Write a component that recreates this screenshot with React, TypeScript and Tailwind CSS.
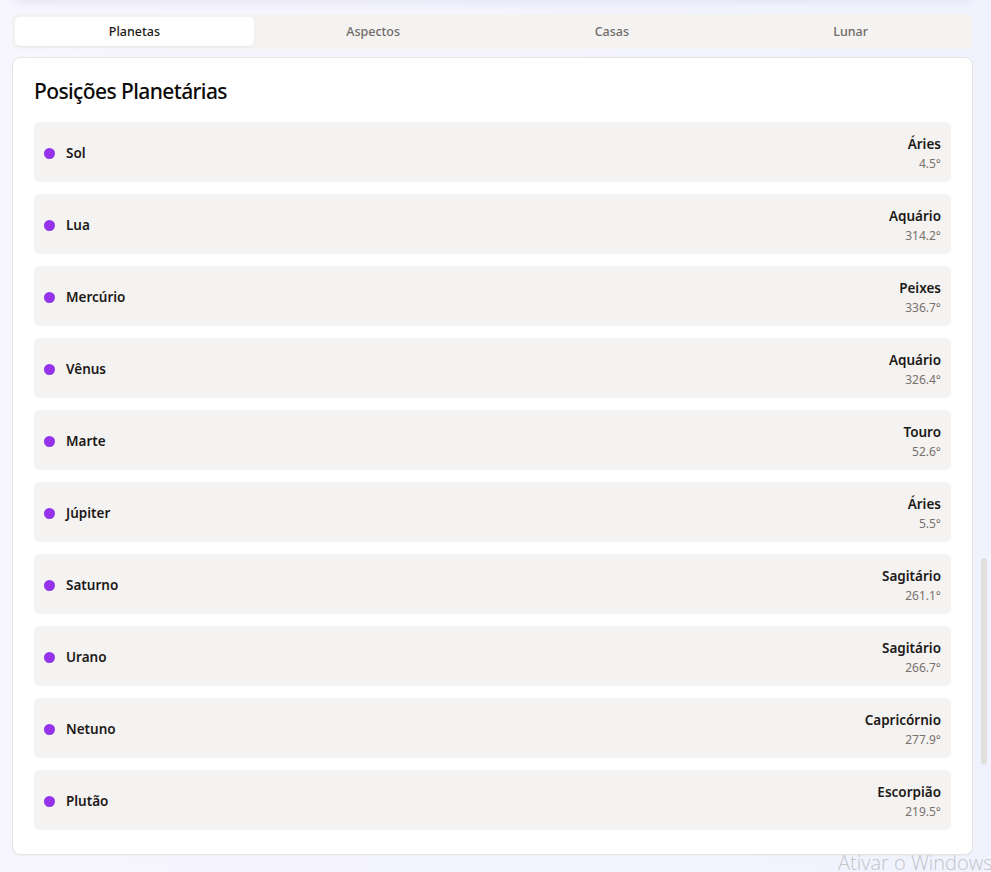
import React from 'react';

// Posições de cada planeta no mapa
const planets = [
  { name: 'Sol', sign: 'Áries', degree: '4.5°' },
  { name: 'Lua', sign: 'Aquário', degree: '314.2°' },
  { name: 'Mercúrio', sign: 'Peixes', degree: '336.7°' },
  { name: 'Vênus', sign: 'Aquário', degree: '326.4°' },
  { name: 'Marte', sign: 'Touro', degree: '52.6°' },
  { name: 'Júpiter', sign: 'Áries', degree: '5.5°' },
  { name: 'Saturno', sign: 'Sagitário', degree: '261.1°' },
  { name: 'Urano', sign: 'Sagitário', degree: '266.7°' },
  { name: 'Netuno', sign: 'Capricórnio', degree: '277.9°' },
  { name: 'Plutão', sign: 'Escorpião', degree: '219.5°' },
];

const tabs = ['Planetas', 'Aspectos', 'Casas', 'Lunar'];

export default function App() {
  return (
    <div
      className="relative h-[872px] overflow-hidden bg-gradient-to-r from-[#f7f5fe] to-[#f0f3fe] pl-3 pr-[18px]"
      style={{ fontFamily: '"Noto Sans", "Open Sans", sans-serif' }}
    >
      {/* card acima, fora da tela */}
      <div className="-mt-[30px] h-[30px] rounded-lg bg-white shadow-[0_2px_8px_rgba(90,80,160,0.10)]" />

      {/* Abas */}
      <div className="mt-[14px] grid grid-cols-4 rounded-md bg-[#f4f3f1] p-[3px]">
        {tabs.map((tab, i) => (
          <div
            key={tab}
            className={
              i === 0
                ? 'flex h-[29px] items-center justify-center rounded-[5px] bg-white pt-[2px] text-[12.5px] font-medium text-[#1c1917] shadow-[0_1px_2px_rgba(0,0,0,0.05)]'
                : 'flex h-[29px] items-center justify-center pt-[2px] text-[12.5px] font-medium text-[#6f6b68]'
            }
          >
            {tab}
          </div>
        ))}
      </div>

      {/* Posições */}
      <div className="mt-2 rounded-lg border border-[#e7e5e4] bg-white px-[21px] pb-[24px] pt-[19px] shadow-[0_1px_2px_rgba(0,0,0,0.04)]">
        <h2 className="mb-[17px] text-[21px] font-medium leading-[28px] tracking-[-0.6px] text-[#0c0a09]">
          Posições Planetárias
        </h2>
        <div className="flex flex-col gap-3">
          {planets.map((p) => (
            <div
              key={p.name}
              className="flex h-[60px] items-center justify-between rounded-md bg-[#f4f3f2] px-[10px]"
            >
              <div className="flex items-center gap-[11px] pt-[2px]">
                <span className="h-[11px] w-[11px] rounded-full bg-[#9333ea]" />
                <span className="text-[13.5px] font-semibold text-[#1c1917]">{p.name}</span>
              </div>
              <div className="pt-[4px] text-right">
                <div className="text-[13.5px] font-semibold leading-[20px] text-[#1c1917]">{p.sign}</div>
                <div className="text-[12px] leading-[20px] text-[#78716c]">{p.degree}</div>
              </div>
            </div>
          ))}
        </div>
      </div>

      {/* barra de rolagem */}
      <div className="absolute right-[4px] top-[558px] h-[207px] w-[6px] rounded-full bg-[#e2e0de]" />

      {/* marca d'água */}
      <div
        className="absolute left-[838px] top-[848px] whitespace-nowrap text-[20px] font-light text-[#c4c4c6]"
        style={{ fontFamily: '"Open Sans", sans-serif' }}
      >
        Ativar o Windows
      </div>
    </div>
  );
}
